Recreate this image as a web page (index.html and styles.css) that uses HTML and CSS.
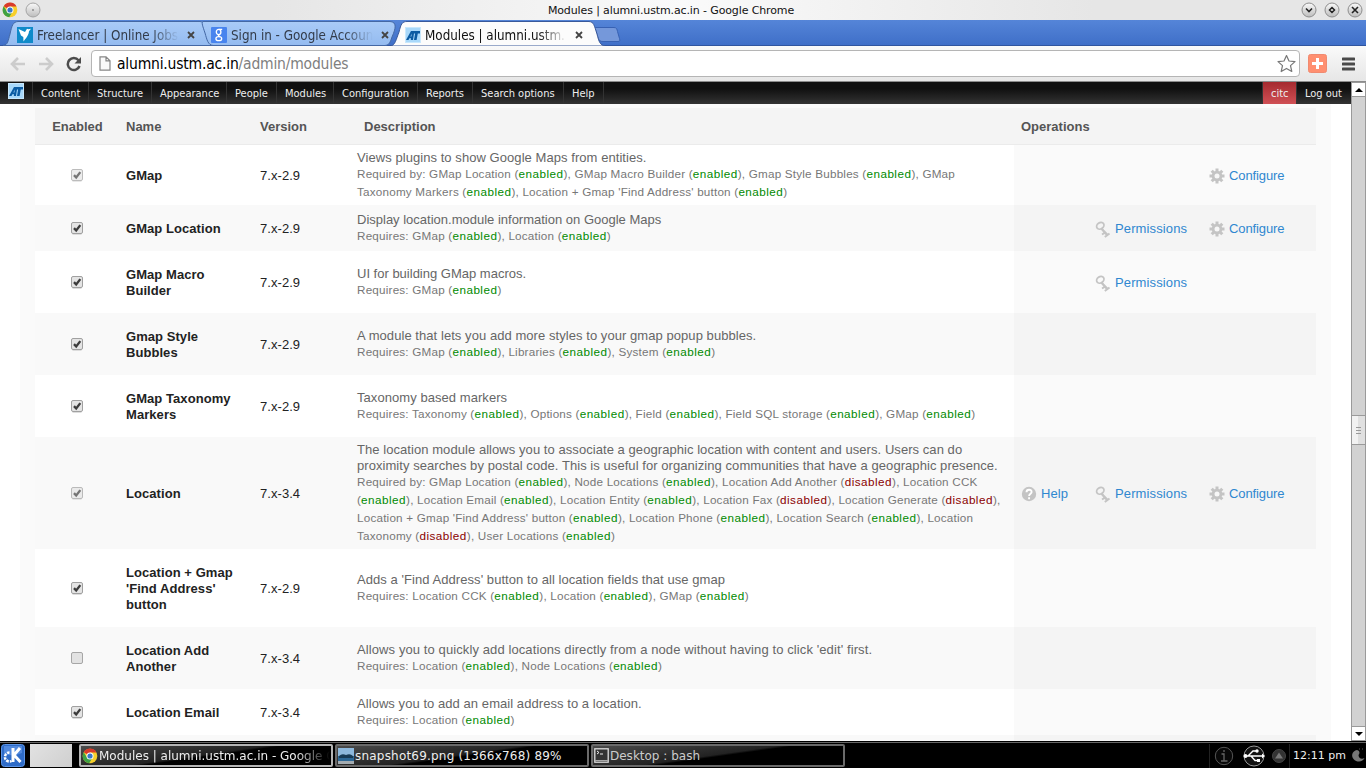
FILE: index.html
```html
<!DOCTYPE html>
<html lang="en">
<head>
    <meta charset="UTF-8">
    <title>Modules | alumni.ustm.ac.in</title>
    <link rel="stylesheet" href="styles.css">
</head>
<body>
    <svg class="defs">
        <defs>
            <linearGradient id="tabBlue" x1="0" y1="0" x2="0" y2="1">
                <stop offset="0" stop-color="#a9cbf7"/>
                <stop offset="1" stop-color="#94bbf0"/>
            </linearGradient>
            <linearGradient id="btnGrey" x1="0" y1="0" x2="0" y2="1">
                <stop offset="0" stop-color="#fafafa"/>
                <stop offset="1" stop-color="#bcbcbc"/>
            </linearGradient>
            <symbol id="chrome" viewBox="0 0 16 16">
                <circle cx="8" cy="8" r="7.3" fill="#f7cf2b"/>
                <path d="M8 8 1.7 4.2A7.3 7.3 0 0 1 14.5 4.6H8z" fill="#d93a2b"/>
                <path d="M1.7 4.2A7.3 7.3 0 0 0 7.2 15.3L10.6 9.6 8 8 5 9.5z" fill="#3fa144"/>
                <circle cx="8" cy="8" r="3.5" fill="#fff"/>
                <circle cx="8" cy="8" r="2.6" fill="#3a78c8"/>
            </symbol>
            <symbol id="at" viewBox="0 0 16 16">
                <rect width="16" height="16" fill="#a8d8fa"/>
                <rect x=".5" y=".5" width="15" height="15" fill="none" stroke="#c8e8fd"/>
                <path d="M1 13 6 4h9v2.5h-2.2L11.6 13H9l1.1-6.5H9L8 13H5.8l.2-1.8H4.4L3.5 13zM5.4 9.4h1L6.8 6.6z" fill="#0a5ba3"/>
            </symbol>
            <symbol id="gear" viewBox="0 0 16 16">
                <path d="M8 .5v15M.5 8h15M2.7 2.7l10.6 10.6M13.3 2.7 2.7 13.3" stroke="#c4c4c4" stroke-width="3"/>
                <circle cx="8" cy="8" r="5.3" fill="#c4c4c4"/>
                <circle cx="8" cy="8" r="2.5" class="hole"/>
            </symbol>
            <symbol id="key" viewBox="0 0 16 17">
                <ellipse cx="5.3" cy="4.8" rx="3.9" ry="3.1" transform="rotate(-35 5.3 4.800)" fill="none" stroke="#c4c4c4" stroke-width="1.800"/>
                <path d="M6.500 7.500l1.700 2 4 4.300" fill="none" stroke="#c4c4c4" stroke-width="2.500"/>
                <path d="M7 13.500l3-1.800M9.800 16l4.700-3.500" fill="none" stroke="#c4c4c4" stroke-width="2"/>
            </symbol>
            <symbol id="help" viewBox="0 0 16 16">
                <circle cx="8" cy="8" r="7.2" fill="#c4c4c4"/>
                <path d="M5.5 6.2C5.5 2.8 10.7 3 10.6 6c0 1.700-2.500 1.800-2.500 4M8.100 11.200v2" fill="none" stroke="#fff" stroke-width="1.900"/>
            </symbol>
            <symbol id="check" viewBox="0 0 12 13">
                <rect x=".5" y=".5" width="11" height="11" rx="1.5" fill="#e4e4e4" stroke="#a0a0a0"/>
                <path d="M1.5 12.500h9" stroke="#ddd"/>
                <path d="M3 6.100 5.200 8.500 9.300 3.100" fill="none" stroke="#3c3c3c" stroke-width="2.300"/>
            </symbol>
            <symbol id="uncheck" viewBox="0 0 12 13">
                <rect x=".5" y=".5" width="11" height="11" rx="1.5" fill="#e2e2e2" stroke="#a6a6a6"/>
            </symbol>
            <symbol id="x" viewBox="0 0 8 8">
                <path d="M1 1l6 6M7 1 1 7" stroke="#444" stroke-width="1.8"/>
            </symbol>
        </defs>
    </svg>

    <div class="titlebar">
        <div class="title-left">
            <svg width="16" height="16"><use href="#chrome"/></svg>
            <svg width="16" height="16" viewBox="0 0 16 16"><circle cx="8" cy="8" r="7" fill="url(#btnGrey)" stroke="#a5a5a5"/><circle cx="8" cy="8" r=".8" fill="#555"/></svg>
        </div>
        <span class="window-title">Modules | alumni.ustm.ac.in - Google Chrome</span>
        <div class="title-right">
            <svg width="16" height="16" viewBox="0 0 16 16"><circle cx="8" cy="8" r="7" fill="url(#btnGrey)" stroke="#8e8e8e"/><path d="M5 6.5l3 3 3-3" fill="none" stroke="#222" stroke-width="1.6"/></svg>
            <svg width="16" height="16" viewBox="0 0 16 16"><circle cx="8" cy="8" r="7" fill="url(#btnGrey)" stroke="#8e8e8e"/><path d="M8 5.5 10.5 8 8 10.5 5.5 8z" fill="none" stroke="#222" stroke-width="1.5"/></svg>
            <svg width="16" height="16" viewBox="0 0 16 16"><circle cx="8" cy="8" r="7" fill="url(#btnGrey)" stroke="#8e8e8e"/><path d="M5 5l6 6M11 5l-6 6" stroke="#222" stroke-width="1.6"/></svg>
        </div>
    </div>

    <div class="tabs">
        <div class="tab">
            <svg class="tab-bg" width="210" height="26"><path d="M1 25.500C6 25 6 21 8 14 10 5 11 2 16 1.500H198C203 2 203 5 205.500 14 207 21 208 25 212 25.500z" fill="url(#tabBlue)" stroke="#4468a4"/></svg>
            <svg class="favicon" width="16" height="16" viewBox="0 0 16 16"><rect width="16" height="16" fill="#0f8ac9"/><path d="M1.5 2 8 5l2-3.300 1.400.6 2.600-.5-2 2.500C11.500 9 9 11 6.500 14.500L6.300 10 4 8.500z" fill="#fff"/></svg>
            <span class="tab-text">Freelancer | Online Jobs</span>
            <svg class="close" width="8" height="8"><use href="#x"/></svg>
        </div>
        <div class="tab second">
            <svg class="tab-bg" width="206" height="26"><path d="M3 1.500H190C197 2 196 8 192 17 190 23 189 25 185 25.500H13C8 25 7 20 5 13 3 7 1 2 3 1.500z" fill="url(#tabBlue)" stroke="#4468a4"/></svg>
            <svg class="favicon" width="16" height="16" viewBox="0 0 16 16"><rect width="16" height="16" rx="1" fill="#4884ee"/><g fill="none" stroke="#fff" stroke-width="1.3"><ellipse cx="7.6" cy="5" rx="2.3" ry="2.6"/><path d="M8 2.4h3.2M8.3 7.5c-1.800 1.200-.5 1.300.8 2.200"/><ellipse cx="7.8" cy="11.7" rx="2.9" ry="2"/></g></svg>
            <span class="tab-text">Sign in - Google Accoun</span>
            <svg class="close" width="8" height="8"><use href="#x"/></svg>
        </div>
        <div class="tab active">
            <svg class="tab-bg" width="214" height="26"><path d="M0 26C4 25 5 20 8 12 10 4 11 1.500 16 1.500H198C203 2 203 5 206 14 208 22 209 25 214 26z" fill="#fcfcfc" stroke="#39599b"/></svg>
            <svg class="favicon" width="16" height="16"><use href="#at"/></svg>
            <span class="tab-text">Modules | alumni.ustm.</span>
            <svg class="close" width="8" height="8"><use href="#x"/></svg>
        </div>
        <svg class="newtab" width="27" height="17" viewBox="0 0 27 17"><path d="M2 1.5h18c3 0 3 2 3.500 4l2 7c.5 2 .5 3-1.500 3H9c-3 0-4-1-5-4L1.500 4C1 2.500 1 1.500 2 1.500z" fill="#7598da" stroke="#3761b3"/></svg>
    </div>

    <div class="toolbar">
        <div class="nav">
            <svg width="16" height="14" viewBox="0 0 16 14"><path d="M15 7H3M8 1 2 7l6 6" fill="none" stroke="#ccc" stroke-width="2.6"/></svg>
            <svg width="16" height="14" viewBox="0 0 16 14"><path d="M1 7h12M8 1l6 6-6 6" fill="none" stroke="#ccc" stroke-width="2.6"/></svg>
            <svg width="16" height="16" viewBox="0 0 16 16"><path d="M12.5 4.3A6 6 0 1 0 13.5 10" fill="none" stroke="#4c4c4c" stroke-width="2.5"/><path d="M15 1v6.500H8.500z" fill="#4c4c4c"/></svg>
        </div>
        <div class="omnibox">
            <svg width="12" height="15" viewBox="0 0 12 15"><path d="M1 .8h6l4 4v9.400H1zM7 .8v4h4" fill="#fafafa" stroke="#878787" stroke-width="1.2"/></svg>
            <span class="url">alumni.ustm.ac.in<span class="path">/admin/modules</span></span>
            <svg class="star" width="19" height="19" viewBox="0 0 19 19"><path d="M9.5 1.5 12 7l6 .6-4.500 4 1.300 5.900-5.300-3.100-5.300 3.100 1.300-5.900-4.500-4L7 7z" fill="#fff" stroke="#777" stroke-width="1.2" stroke-linejoin="round"/></svg>
        </div>
        <svg class="plus" width="19" height="19" viewBox="0 0 19 19"><rect x=".5" y=".5" width="18" height="18" rx="2" fill="#ff8f70" stroke="#f08a70"/><path d="M9.5 4v11M4 9.500h11" stroke="#fff" stroke-width="3"/></svg>
        <svg class="burger" width="13" height="14" viewBox="0 0 13 14"><path d="M1 2h11M1 7h11M1 12h11" stroke="#4a4a4a" stroke-width="3" stroke-linecap="round"/></svg>
    </div>

    <div class="page">
        <div class="content">
            <div class="menu">
                <svg class="menu-logo" width="16" height="16"><use href="#at"/></svg>
                <a class="m1">Content</a>
                <a class="m2">Structure</a>
                <a class="m3">Appearance</a>
                <a class="m4">People</a>
                <a class="m5">Modules</a>
                <a class="m6">Configuration</a>
                <a class="m7">Reports</a>
                <a class="m8">Search options</a>
                <a class="m9">Help</a>
                <a class="user">citc</a>
                <a class="logout">Log out</a>
            </div>
            <div class="panel">
                <table class="modules">
                    <tr class="head">
                        <th class="c-enabled">Enabled</th>
                        <th class="c-name">Name</th>
                        <th class="c-version">Version</th>
                        <th class="c-desc">Description</th>
                        <th class="c-ops">Operations</th>
                    </tr>
                    <tr class="h60">
                        <td class="c-enabled"><svg class="faded" width="12" height="13"><use href="#check"/></svg></td>
                        <td class="c-name">GMap</td>
                        <td>7.x-2.9</td>
                        <td>Views plugins to show Google Maps from entities.
                            <div class="req">Required by: GMap Location (<b>enabled</b>), GMap Macro Builder (<b>enabled</b>), Gmap Style Bubbles (<b>enabled</b>), GMap<br>Taxonomy Markers (<b>enabled</b>), Location + Gmap 'Find Address' button (<b>enabled</b>)</div></td>
                        <td class="ops"><div class="links"><a class="l-conf"><svg width="16" height="16"><use href="#gear"/></svg>Configure</a></div></td>
                    </tr>
                    <tr class="h46 even">
                        <td class="c-enabled"><svg width="12" height="13"><use href="#check"/></svg></td>
                        <td class="c-name">GMap Location</td>
                        <td>7.x-2.9</td>
                        <td class="tight">Display location.module information on Google Maps
                            <div class="req">Requires: GMap (<b>enabled</b>), Location (<b>enabled</b>)</div></td>
                        <td class="ops"><div class="links"><a class="l-perm"><svg width="16" height="17"><use href="#key"/></svg>Permissions</a><a class="l-conf"><svg width="16" height="16"><use href="#gear"/></svg>Configure</a></div></td>
                    </tr>
                    <tr class="h62">
                        <td class="c-enabled"><svg width="12" height="13"><use href="#check"/></svg></td>
                        <td class="c-name">GMap Macro<br>Builder</td>
                        <td>7.x-2.9</td>
                        <td class="tight">UI for building GMap macros.
                            <div class="req">Requires: GMap (<b>enabled</b>)</div></td>
                        <td class="ops"><div class="links"><a class="l-perm"><svg width="16" height="17"><use href="#key"/></svg>Permissions</a></div></td>
                    </tr>
                    <tr class="h62 even">
                        <td class="c-enabled"><svg width="12" height="13"><use href="#check"/></svg></td>
                        <td class="c-name">Gmap Style<br>Bubbles</td>
                        <td>7.x-2.9</td>
                        <td>A module that lets you add more styles to your gmap popup bubbles.
                            <div class="req">Requires: GMap (<b>enabled</b>), Libraries (<b>enabled</b>), System (<b>enabled</b>)</div></td>
                        <td class="ops"></td>
                    </tr>
                    <tr class="h62">
                        <td class="c-enabled"><svg width="12" height="13"><use href="#check"/></svg></td>
                        <td class="c-name">GMap Taxonomy<br>Markers</td>
                        <td>7.x-2.9</td>
                        <td>Taxonomy based markers
                            <div class="req">Requires: Taxonomy (<b>enabled</b>), Options (<b>enabled</b>), Field (<b>enabled</b>), Field SQL storage (<b>enabled</b>), GMap (<b>enabled</b>)</div></td>
                        <td class="ops"></td>
                    </tr>
                    <tr class="h112 even">
                        <td class="c-enabled"><svg class="faded" width="12" height="13"><use href="#check"/></svg></td>
                        <td class="c-name">Location</td>
                        <td>7.x-3.4</td>
                        <td>The location module allows you to associate a geographic location with content and users. Users can do<br>proximity searches by postal code. This is useful for organizing communities that have a geographic presence.
                            <div class="req">Required by: GMap Location (<b>enabled</b>), Node Locations (<b>enabled</b>), Location Add Another (<i>disabled</i>), Location CCK<br>(<b>enabled</b>), Location Email (<b>enabled</b>), Location Entity (<b>enabled</b>), Location Fax (<i>disabled</i>), Location Generate (<i>disabled</i>),<br>Location + Gmap 'Find Address' button (<b>enabled</b>), Location Phone (<b>enabled</b>), Location Search (<b>enabled</b>), Location<br>Taxonomy (<i>disabled</i>), User Locations (<b>enabled</b>)</div></td>
                        <td class="ops"><div class="links"><a class="l-help"><svg width="16" height="16"><use href="#help"/></svg>Help</a><a class="l-perm"><svg width="16" height="17"><use href="#key"/></svg>Permissions</a><a class="l-conf"><svg width="16" height="16"><use href="#gear"/></svg>Configure</a></div></td>
                    </tr>
                    <tr class="h78">
                        <td class="c-enabled"><svg width="12" height="13"><use href="#check"/></svg></td>
                        <td class="c-name">Location + Gmap<br>'Find Address'<br>button</td>
                        <td>7.x-2.9</td>
                        <td>Adds a 'Find Address' button to all location fields that use gmap
                            <div class="req">Requires: Location CCK (<b>enabled</b>), Location (<b>enabled</b>), GMap (<b>enabled</b>)</div></td>
                        <td class="ops"></td>
                    </tr>
                    <tr class="h62 even">
                        <td class="c-enabled"><svg width="12" height="13"><use href="#uncheck"/></svg></td>
                        <td class="c-name">Location Add<br>Another</td>
                        <td>7.x-3.4</td>
                        <td class="loose">Allows you to quickly add locations directly from a node without having to click 'edit' first.
                            <div class="req">Requires: Location (<b>enabled</b>), Node Locations (<b>enabled</b>)</div></td>
                        <td class="ops"></td>
                    </tr>
                    <tr class="h46">
                        <td class="c-enabled"><svg width="12" height="13"><use href="#check"/></svg></td>
                        <td class="c-name">Location Email</td>
                        <td>7.x-3.4</td>
                        <td>Allows you to add an email address to a location.
                            <div class="req">Requires: Location (<b>enabled</b>)</div></td>
                        <td class="ops"></td>
                    </tr>
                    <tr class="h46 even">
                        <td></td><td></td><td></td><td></td><td class="ops"></td>
                    </tr>
                </table>
            </div>
        </div>
        <div class="scrollbar">
            <div class="arrow"><svg width="8" height="4" viewBox="0 0 8 4"><path d="M4 0l4 4H0z"/></svg></div>
            <div class="track-top"></div>
            <div class="thumb"><span></span><span></span><span></span></div>
            <div class="track"></div>
            <div class="arrow"><svg width="8" height="4" viewBox="0 0 8 4"><path d="M0 0h8L4 4z"/></svg></div>
        </div>
    </div>

    <div class="taskbar">
        <svg class="kde" width="24" height="23" viewBox="0 0 24 23"><rect x=".5" y=".5" width="23" height="22" rx="3" fill="#2f6cc8" stroke="#5b94e6"/><path d="M3 2h18v7Q12 13 3 10z" fill="#6ea3ee" opacity=".55"/><path d="M12 4v14M19 4l-6 7 6.500 7" fill="none" stroke="#fff" stroke-width="3"/><path d="M8.500 8.500a4.500 4.500 0 1 0 2 8.500" fill="none" stroke="#fff" stroke-width="2.500" stroke-dasharray="2.500 1"/></svg>
        <div class="pager"></div>
        <div class="task current">
            <svg width="16" height="16"><use href="#chrome"/></svg>
            <span class="task-text fade">Modules | alumni.ustm.ac.in - Google C</span>
        </div>
        <div class="task">
            <svg width="16" height="16" viewBox="0 0 16 16"><rect width="16" height="16" fill="#8db8dc"/><rect y="8" width="16" height="5" fill="#2c6795"/><path d="M1 8q3-3 7-1 4-2 7 1v2H1z" fill="#183b55"/><rect y="13" width="16" height="3" fill="#a3abb0"/></svg>
            <span class="task-text shot">snapshot69.png (1366x768) 89%</span>
        </div>
        <div class="task dim">
            <svg width="15" height="15" viewBox="0 0 15 15"><rect x=".8" y=".8" width="13.4" height="13.4" fill="#333" stroke="#ddd" stroke-width="1.3"/><path d="M3 3l2 1.500L3 6M6 6h3" fill="none" stroke="#eee"/><path d="M1 12.500h13" stroke="#aaa"/></svg>
            <span class="task-text">Desktop : bash</span>
        </div>
        <div class="tray">
            <svg width="20" height="20" viewBox="0 0 20 20"><circle cx="10" cy="10" r="8.7" fill="#080808" stroke="#555"/><path d="M7.5 8H10v7M7 15h6.500M10 4v2" fill="none" stroke="#666" stroke-width="1.3"/></svg>
            <svg class="usb" width="22" height="22" viewBox="0 0 22 22"><circle cx="11" cy="11" r="10" fill="#111" stroke="#999"/><path d="M1 11h20M5 11l5-5h4M8 11l4 4.500h4" fill="none" stroke="#fff" stroke-width="1.4"/><circle cx="2.5" cy="11" r="2" fill="#fff"/><circle cx="14" cy="6" r="1.7" fill="#fff"/><rect x="14" y="14" width="3" height="3" fill="#fff"/><path d="M19 8.500l3 2.500-3 2.500z" fill="#fff"/></svg>
            <svg class="up" width="14" height="14" viewBox="0 0 14 14"><circle cx="7" cy="7" r="6.5" fill="#333" stroke="#444"/><path d="M7 3.500l4 6H3z" fill="#777"/></svg>
            <span class="clock">12:11 pm</span>
            <svg class="cashew" width="15" height="17" viewBox="0 0 15 17"><path d="M6 3C1 4 0 9 2.500 12c3.500 4 9.500 3 11-1-3 2-6 0-6-3 1-1 2-4-1.500-5z" fill="#777"/><path d="M8 2h5" stroke="#555" stroke-dasharray="1 2"/></svg>
        </div>
    </div>
</body>
</html>
```
FILE: styles.css
```css
* {
    box-sizing: border-box;
}
body {
    margin: 0;
    width: 1366px;
    height: 768px;
    overflow: hidden;
    display: flex;
    flex-direction: column;
    background: #fff;
    font-family: "DejaVu Sans", sans-serif;
    white-space: nowrap;
}
svg {
    display: block;
    flex: none;
}
.defs {
    position: absolute;
    width: 0;
    height: 0;
}

/* window title */
.titlebar {
    height: 20px;
    flex: none;
    display: flex;
    align-items: center;
    justify-content: space-between;
    background: linear-gradient(90deg, #e6e6e6 20%, #fafafa 50%, #e6e6e6 80%);
    padding: 0 3px 0 2px;
}
.title-left, .title-right {
    display: flex;
    width: 90px;
    gap: 7px;
}
.title-right {
    justify-content: flex-end;
}
.window-title {
    font-size: 11px;
    letter-spacing: -.12px;
    margin-right: 23px;
    color: #111;
}

/* tabs */
.tabs {
    height: 26px;
    flex: none;
    display: flex;
    background: linear-gradient(#5585d8, #3f6fc8);
    border-bottom: 1px solid #30559f;
    padding-left: 2px;
}
.tab {
    position: relative;
    width: 198px;
    height: 26px;
    flex: none;
    display: flex;
    align-items: center;
    padding: 4px 0 0 15px;
    font-family: "DejaVu Sans Condensed", "DejaVu Sans", sans-serif;
    font-stretch: condensed;
    font-size: 13.3px;
    color: #333c4a;
}
.tab-bg {
    position: absolute;
    left: 0;
    top: 0;
}
.tab.second {
    width: 191px;
    padding-left: 11px;
}
.tab.active {
    width: 206px;
    padding-left: 14px;
    color: #111;
}
.favicon, .tab-text, .close {
    position: relative;
}
.tab-text {
    width: 142px;
    margin: 0 8px 0 4px;
    overflow: hidden;
    -webkit-mask-image: linear-gradient(90deg, #000 80%, transparent);
    mask-image: linear-gradient(90deg, #000 80%, transparent);
}
.newtab {
    margin: 6px 0 0 -3px;
}

/* toolbar */
.toolbar {
    height: 36px;
    flex: none;
    display: flex;
    align-items: center;
    background: linear-gradient(#fafafa, #e6e6e6);
    border-bottom: 1px solid #8c8c8c;
    padding-left: 10px;
}
.nav {
    display: flex;
    align-items: center;
    gap: 12px;
    width: 81px;
}
.omnibox {
    width: 1209px;
    height: 27px;
    display: flex;
    align-items: center;
    background: #fff;
    border: 1px solid #b5b5b5;
    border-radius: 4px;
    padding: 0 3px 0 7px;
}
.url {
    font-family: "DejaVu Sans Condensed", "DejaVu Sans", sans-serif;
    font-stretch: condensed;
    font-size: 15.5px;
    letter-spacing: -.2px;
    color: #000;
    margin-left: 6px;
}
.path {
    color: #808080;
}
.star {
    margin-left: auto;
}
.plus {
    margin-left: 8px;
}
.burger {
    margin-left: 15px;
}

.page {
    height: 659px;
    flex: none;
    display: flex;
}
.content {
    width: 1351px;
    display: flex;
    flex-direction: column;
    overflow: hidden;
}

/* admin menu */
.menu {
    height: 22px;
    flex: none;
    display: flex;
    background: linear-gradient(#101010 30%, #333);
    font-family: "DejaVu Sans Condensed", "DejaVu Sans", sans-serif;
    font-stretch: condensed;
    font-size: 11px;
    line-height: 24px;
    color: #eee;
}
.menu a {
    height: 22px;
    padding-left: 8px;
    border-left: 1px solid #333;
}
.menu-logo {
    margin: 1px 8px 0;
}
.m1 { width: 56px; }
.m2 { width: 63px; }
.m3 { width: 75px; }
.m4 { width: 50px; }
.m5 { width: 57px; }
.m6 { width: 84px; }
.m7 { width: 55px; }
.m8 { width: 91px; }
.m9 { width: 41px; }
.menu .m9 {
    border-right: 1px solid #333;
}
.menu .user {
    margin-left: auto;
    width: 34px;
    background: linear-gradient(#a52a2f, #d05055);
}
.logout {
    width: 55px;
}

/* modules table */
.panel {
    margin: 0 20px;
    padding: 4px 15px 0;
    flex: 1;
    overflow: hidden;
    background: #fafafa;
}
.modules {
    width: 1281px;
    table-layout: fixed;
    border-collapse: collapse;
    font-family: "Liberation Sans", Arial, sans-serif;
    font-size: 13px;
    line-height: 16px;
    letter-spacing: .06px;
    color: #666;
    background: #fff;
}
.modules th, .modules td {
    padding: 0 0 0 6px;
    text-align: left;
    vertical-align: middle;
}
.modules td {
    padding-top: 2px;
}
.head {
    height: 37px;
    background: #f4f4f4;
    color: #555;
    letter-spacing: 0;
    box-shadow: inset 0 -1px #ebebeb;
}
.modules .c-enabled {
    width: 85px;
    padding-left: 0;
    text-align: center;
}
.modules td.c-enabled {
    padding: 1px 1px 0 0;
}
.c-enabled svg {
    margin: 0 auto;
}
.c-name { width: 134px; }
.c-version { width: 97px; }
.modules th.c-desc {
    width: 663px;
    padding-left: 13px;
}
.modules th.c-ops {
    width: 302px;
    padding-left: 7px;
}
.modules td.c-name {
    font-weight: bold;
    color: #222;
}
.modules td.c-name + td {
    color: #222;
}
.tight { letter-spacing: 0; }
.loose { letter-spacing: .1px; }
.faded {
    opacity: .7;
}
.h46 { height: 46px; }
.h60 { height: 60px; }
.h62 { height: 62px; }
.h78 { height: 78px; }
.h112 { height: 112px; }
.even { background: #f9f9f9; }
.ops { background: #fafafa; }
.even .ops { background: #f4f4f4; }
.req {
    margin: -1px 0 1px;
    font-size: 11.7px;
    line-height: 18px;
    color: #777;
    letter-spacing: .2px;
}
.req b, .req i {
    font-weight: normal;
    font-style: normal;
    letter-spacing: .48px;
    color: #008a00;
}
.req i {
    color: #8a0000;
}
.modules td.ops {
    padding-left: 7px;
}
.links {
    display: grid;
    grid-template-columns: 74px 114px 90px;
}
.links a {
    display: flex;
    align-items: center;
    gap: 4px;
    color: #2f87d0;
}
.l-help { grid-column: 1; }
.l-perm {
    grid-column: 2;
    letter-spacing: .12px;
}
.l-conf {
    grid-column: 3;
    letter-spacing: -.1px;
}
.hole { fill: #f7f7f7; }

/* scrollbar */
.scrollbar {
    width: 15px;
    display: flex;
    flex-direction: column;
    background: #d2d2d2;
    border: 1px solid #9a9a9a;
}
.arrow {
    height: 13px;
    display: flex;
    align-items: center;
    justify-content: center;
    background: #fff;
}
.track-top {
    height: 319px;
    border-top: 1px solid #9a9a9a;
}
.thumb {
    height: 30px;
    display: flex;
    flex-direction: column;
    align-items: center;
    justify-content: center;
    gap: 2px;
    background: linear-gradient(90deg, #f2f2f2 50%, #e0e0e0 50%);
    border: solid #9a9a9a;
    border-width: 1px 0;
}
.thumb span {
    width: 5px;
    height: 1px;
    background: #999;
}
.track {
    flex: 1;
    border-bottom: 1px solid #9a9a9a;
}

/* taskbar */
.taskbar {
    height: 27px;
    flex: none;
    display: flex;
    align-items: center;
    background: #000;
    box-shadow: inset 0 1px #000, inset 0 2px #666;
    padding: 2px 0 0 1px;
}
.pager {
    width: 42px;
    height: 23px;
    margin: 0 7px 0 5px;
    background: linear-gradient(135deg, #e2e2e2, #cfcfcf);
}
.task {
    width: 254px;
    height: 23px;
    margin-right: 2px;
    display: flex;
    align-items: center;
    gap: 1px;
    padding-left: 1px;
    border: 2px solid #6a6a6a;
    border-radius: 2px;
    background: linear-gradient(172deg, #4a4a4a 0, #222 48%, #000 52%);
    color: #eee;
    font-size: 12px;
}
.task.current {
    border-color: #b5b5b5;
}
.task.dim {
    color: #ccc;
}
.shot {
    letter-spacing: .2px;
}
.fade {
    width: 231px;
    overflow: hidden;
    -webkit-mask-image: linear-gradient(90deg, #000 85%, transparent);
    mask-image: linear-gradient(90deg, #000 85%, transparent);
}
.tray {
    margin-left: auto;
    height: 24px;
    display: flex;
    align-items: center;
    border-left: 1px solid #222;
    padding-left: 4px;
    color: #eee;
    font-size: 11px;
}
.usb { margin-left: 9px; }
.up { margin: 0 3px 0 7px; }
.clock {
    width: 62px;
    line-height: 24px;
    padding-left: 3px;
    border-left: 1px solid #222;
}
```
